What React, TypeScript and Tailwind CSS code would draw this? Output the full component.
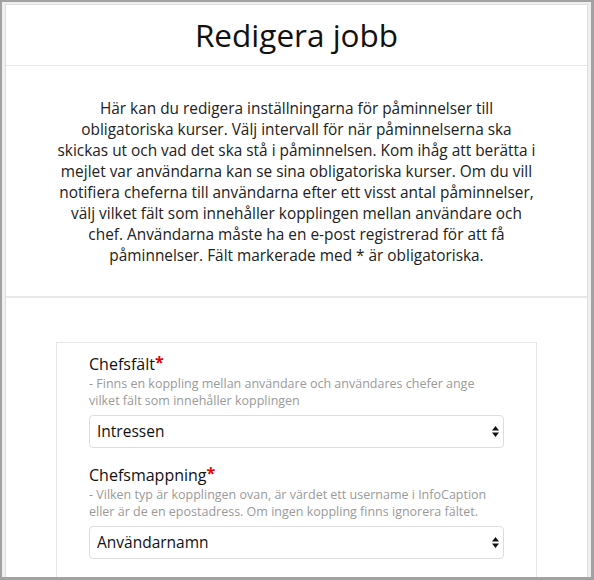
import React from "react";

const intro = [
  "Här kan du redigera inställningarna för påminnelser till",
  "obligatoriska kurser. Välj intervall för när påminnelserna ska",
  "skickas ut och vad det ska stå i påminnelsen. Kom ihåg att berätta i",
  "mejlet var användarna kan se sina obligatoriska kurser. Om du vill",
  "notifiera cheferna till användarna efter ett visst antal påminnelser,",
  "välj vilket fält som innehåller kopplingen mellan användare och",
  "chef. Användarna måste ha en e-post registrerad för att få",
  "påminnelser. Fält markerade med * är obligatoriska.",
];

const fields = [
  {
    label: "Chefsfält",
    help: [
      "- Finns en koppling mellan användare och användares chefer ange",
      "vilket fält som innehåller kopplingen",
    ],
    value: "Intressen",
    options: ["Intressen", "Avdelning", "Chef"],
  },
  {
    label: "Chefsmappning",
    help: [
      "- Vilken typ är kopplingen ovan, är värdet ett username i InfoCaption",
      "eller är de en epostadress. Om ingen koppling finns ignorera fältet.",
    ],
    value: "Användarnamn",
    options: ["Användarnamn", "E-postadress"],
  },
  {
    label: "Antal påminnelser innan chef meddelas",
    help: ["- Efter hur många påminnelser ska chefen få ett meddelande"],
    value: "3",
    options: ["1", "2", "3", "4", "5"],
  },
];

function SelectField({ field }: { field: (typeof fields)[number] }) {
  return (
    <div className="mb-[16px]">
      <label className="block text-[16px] leading-[22px] text-[#111]">
        {field.label}
        <span className="relative -top-[2px] font-bold text-[#e60000]">*</span>
      </label>
      <p className="text-[12.5px] leading-[17px] text-[#9a9a9a]">
        {field.help.map((line) => (
          <span key={line} className="block whitespace-nowrap">
            {line}
          </span>
        ))}
      </p>
      <div className="relative mt-[6px]">
        <select
          defaultValue={field.value}
          className="h-[33px] w-full appearance-none rounded-[4px] border border-[#dddddd] bg-white pl-[7px] pr-8 text-[15.5px] text-[#111] outline-none"
        >
          {field.options.map((o) => (
            <option key={o}>{o}</option>
          ))}
        </select>
        <svg
          className="pointer-events-none absolute right-[5px] top-[11px]"
          width="7"
          height="11"
          viewBox="0 0 7 11"
        >
          <path d="M3.5 0L7 4.5H0Z" fill="#111" />
          <path d="M3.5 11L0 6.5H7Z" fill="#111" />
        </svg>
      </div>
    </div>
  );
}

export default function App() {
  return (
    <div
      className="h-[580px] w-[594px] overflow-hidden border-l-2 border-t-2 border-r-[3px] border-b-[3px] border-[#a2a2a2] bg-[#efefef] pl-[3px] pt-[2px] pr-[3px]"
      style={{ fontFamily: '"Open Sans", "Noto Sans", sans-serif' }}
    >
      <div className="h-[600px] border border-[#dedede] bg-white">
        {/* Rubrik */}
        <div className="h-[61px] border-b border-[#e6e6e6] pt-[14px] text-center">
          <h1 className="text-[31.5px] leading-none text-[#111]">Redigera jobb</h1>
        </div>

        {/* Beskrivning */}
        <div className="border-b-2 border-[#e8e8e8] pb-[30px] pt-[32px] text-center text-[15.4px] leading-[21px] text-[#222]">
          {intro.map((line) => (
            <p key={line} className="whitespace-nowrap">
              {line}
            </p>
          ))}
        </div>

        {/* Formulär */}
        <div className="pt-[44px]">
          <div className="mx-auto w-[481px] border border-[#e6e6e6] px-[32px] pt-[10px]">
            {fields.map((f) => (
              <SelectField key={f.label} field={f} />
            ))}
          </div>
        </div>
      </div>
    </div>
  );
}
